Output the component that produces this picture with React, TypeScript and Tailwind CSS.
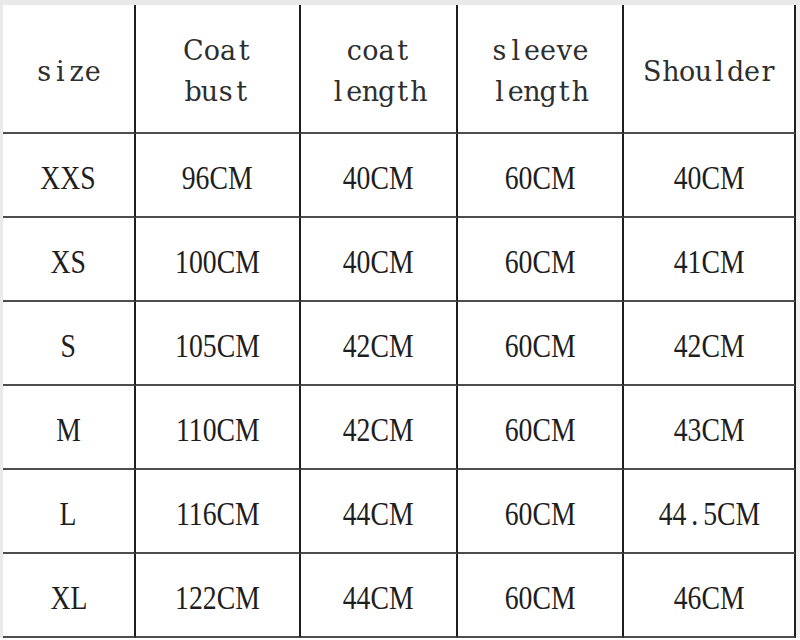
import React from "react";

const header: string[][] = [["size"], ["Coat", "bust"], ["coat", "length"], ["sleeve", "length"], ["Shoulder"]];
const rows: string[][] = [
  ["XXS", "96CM", "40CM", "60CM", "40CM"],
  ["XS", "100CM", "40CM", "60CM", "41CM"],
  ["S", "105CM", "42CM", "60CM", "42CM"],
  ["M", "110CM", "42CM", "60CM", "43CM"],
  ["L", "116CM", "44CM", "60CM", "44.5CM"],
  ["XL", "122CM", "44CM", "60CM", "46CM"],
];

const widths = ["w-[133px]", "w-[165px]", "w-[157px]", "w-[166px]", "w-[172px]"];

function MonoLine({ text }: { text: string }) {
  return (
    <div className="flex justify-center h-[41px] items-end">
      {text.split("").map((ch, i) => (
        <span
          key={i}
          className={
            ch === ch.toUpperCase()
              ? "w-[21px] flex justify-center"
              : "w-[16.2px] flex justify-center"
          }
        >
          {ch}
        </span>
      ))}
    </div>
  );
}

function DataText({ text }: { text: string }) {
  const parts = text.split(".");
  return (
    <div className="scale-x-[0.84] flex items-center">
      {parts.map((p, i) => (
        <React.Fragment key={i}>
          {i > 0 && <span className="w-[20px] flex justify-center">.</span>}
          <span>{p}</span>
        </React.Fragment>
      ))}
    </div>
  );
}

export default function App() {
  return (
    <div className="w-[800px] h-[640px] bg-white overflow-hidden relative">
      <div className="h-[5px] bg-[#e9e9e9]" />
      <div className="flex">
        <div className="w-[3px] bg-[#e9e9e9] h-[633px]" />
        <div className="flex flex-col">
          <div className="flex h-[129px]">
            {header.map((lines, i) => (
              <div
                key={i}
                className={`${widths[i]} h-full border-r-2 border-b-2 border-r-[#1e1e1e] border-b-[#4d4d4d] flex items-center justify-center`}
              >
                <div className="text-[27px] leading-[30px] text-[#2e2e2e] font-['DejaVu_Serif',serif] flex flex-col pb-[5px]">
                  {lines.map((l, j) => (
                    <MonoLine key={j} text={l} />
                  ))}
                </div>
              </div>
            ))}
          </div>
          {rows.map((r, ri) => (
            <div key={ri} className="flex h-[84px]">
              {r.map((c, ci) => (
                <div
                  key={ci}
                  className={`${widths[ci]} h-full border-r-2 border-b-2 border-r-[#1e1e1e] border-b-[#4d4d4d] flex items-center justify-center`}
                >
                  <div className="text-[33px] leading-[33px] text-[#1e1e1e] font-['Liberation_Serif',serif] pt-[6px]">
                    <DataText text={c} />
                  </div>
                </div>
              ))}
            </div>
          ))}
        </div>
        <div className="flex-1 bg-[#f0f0f0]" />
      </div>
    </div>
  );
}
